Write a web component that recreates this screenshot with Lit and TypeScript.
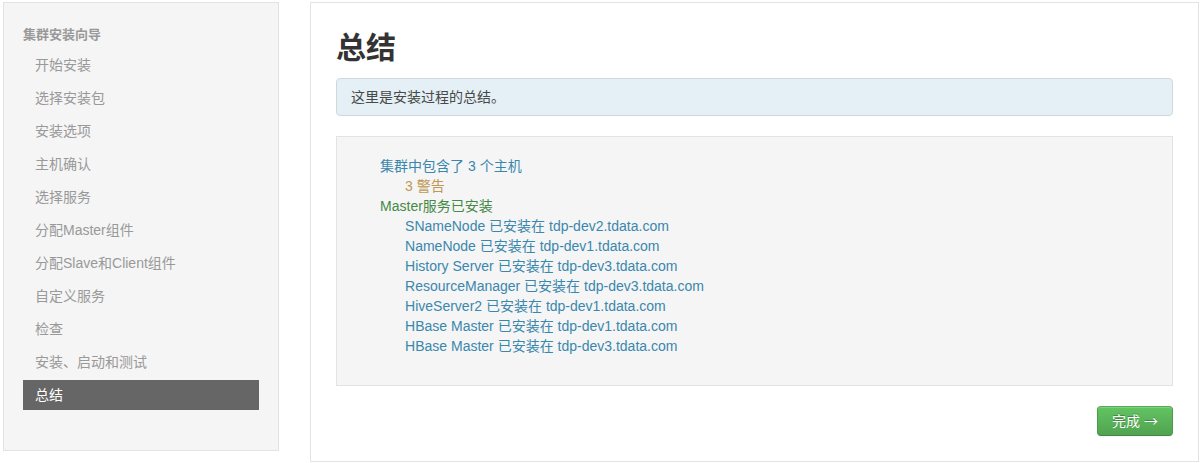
import { LitElement, html, css } from "lit";
import { customElement, property, state } from "lit/decorators.js";
import { classMap } from "lit/directives/class-map.js";

@customElement("wizard-nav")
export class WizardNav extends LitElement {
  @property({ attribute: false }) steps: string[] = [];
  @property({ type: Number }) current = 0;

  static styles = css`
    :host {
      display: block;
    }
    .nav {
      box-sizing: border-box;
      padding: 19px 19px 40px;
      background: #f5f5f5;
      border: 1px solid #e3e3e3;
    }
    .title {
      margin: 0;
      padding: 3px 0 5px;
      font-size: 13px;
      font-weight: bold;
      line-height: 20px;
      color: #999;
    }
    .steps {
      display: flex;
      flex-direction: column;
      gap: 3px;
      margin: 0;
      padding: 0;
      list-style: none;
    }
    .step {
      padding: 5px 12px;
      line-height: 20px;
      color: #999;
    }
    .active {
      background: #666;
      color: #fff;
    }
  `;

  render() {
    return html`
      <nav class="nav" aria-labelledby="title">
        <h2 class="title" id="title">集群安装向导</h2>
        <ol class="steps">
          ${this.steps.map(
            (step, i) => html`<li class=${classMap({ step: true, active: i === this.current })}>${step}</li>`
          )}
        </ol>
      </nav>
    `;
  }
}

interface Installed {
  component: string;
  host: string;
}

@customElement("install-summary")
export class InstallSummary extends LitElement {
  @property({ type: Number }) hosts = 0;
  @property({ type: Number }) warnings = 0;
  @property({ attribute: false }) installed: Installed[] = [];

  static styles = css`
    :host {
      display: block;
    }
    .panel {
      padding: 25px;
      background: #fff;
      border: 1px solid #e3e3e3;
    }
    .heading {
      margin: 0 0 10px;
      font-size: 30px;
      font-weight: bold;
      line-height: 40px;
    }
    .info {
      margin: 0 0 20px;
      padding: 8px 14px;
      line-height: 20px;
      color: #484848;
      background: #e4f0f5;
      border: 1px solid #cfd9db;
      border-radius: 4px;
    }
    .well {
      margin-bottom: 20px;
      padding: 19px 19px 29px 43px;
      background: #f5f5f5;
      border: 1px solid #e3e3e3;
    }
    .list,
    .sublist {
      margin: 0;
      padding: 0;
      list-style: none;
      line-height: 20px;
      color: #3a87ad;
    }
    .sublist {
      padding-left: 25px;
    }
    .warning {
      color: #c09853;
    }
    .success {
      color: #468847;
    }
    .actions {
      display: flex;
      justify-content: flex-end;
    }
    .done {
      padding: 4px 14px;
      font: inherit;
      line-height: 20px;
      color: #fff;
      text-shadow: 0 -1px 0 rgba(0, 0, 0, 0.25);
      background: linear-gradient(#62c462, #51a351);
      border: 1px solid;
      border-color: #56ab56 #4c984c #438743;
      border-radius: 4px;
      box-shadow: inset 0 1px 0 rgba(255, 255, 255, 0.2), 0 1px 2px rgba(0, 0, 0, 0.05);
      cursor: pointer;
    }
    .arrow {
      font-family: "Noto Sans CJK SC", sans-serif;
      line-height: 1;
    }
  `;

  render() {
    return html`
      <main class="panel">
        <h1 class="heading">总结</h1>
        <p class="info">这里是安装过程的总结。</p>
        <div class="well">
          <ul class="list">
            <li>
              集群中包含了 ${this.hosts} 个主机
              <ul class="sublist">
                <li class="warning">${this.warnings} 警告</li>
              </ul>
            </li>
            <li>
              <span class="success">Master服务已安装</span>
              <ul class="sublist">
                ${this.installed.map((item) => html`<li>${item.component} 已安装在 ${item.host}</li>`)}
              </ul>
            </li>
          </ul>
        </div>
        <div class="actions">
          <button class="done" type="button">完成 <span class="arrow">→</span></button>
        </div>
      </main>
    `;
  }
}

@customElement("app-root")
export class AppRoot extends LitElement {
  @state() private steps = [
    "开始安装",
    "选择安装包",
    "安装选项",
    "主机确认",
    "选择服务",
    "分配Master组件",
    "分配Slave和Client组件",
    "自定义服务",
    "检查",
    "安装、启动和测试",
    "总结",
  ];

  @state() private installed: Installed[] = [
    { component: "SNameNode", host: "tdp-dev2.tdata.com" },
    { component: "NameNode", host: "tdp-dev1.tdata.com" },
    { component: "History Server", host: "tdp-dev3.tdata.com" },
    { component: "ResourceManager", host: "tdp-dev3.tdata.com" },
    { component: "HiveServer2", host: "tdp-dev1.tdata.com" },
    { component: "HBase Master", host: "tdp-dev1.tdata.com" },
    { component: "HBase Master", host: "tdp-dev3.tdata.com" },
  ];

  static styles = css`
    :host {
      display: block;
      background: #fff;
      color: #333;
      font-family: "Liberation Sans", "Noto Sans CJK SC", sans-serif;
      font-size: 14px;
      line-height: 20px;
    }
    .layout {
      display: grid;
      grid-template-columns: 3fr minmax(0, 9.66fr);
      column-gap: 31px;
      align-items: start;
      padding: 2px 5px 1px 3px;
    }
  `;

  render() {
    return html`
      <div class="layout">
        <wizard-nav .steps=${this.steps} .current=${this.steps.length - 1}></wizard-nav>
        <install-summary .hosts=${3} .warnings=${3} .installed=${this.installed}></install-summary>
      </div>
    `;
  }
}
